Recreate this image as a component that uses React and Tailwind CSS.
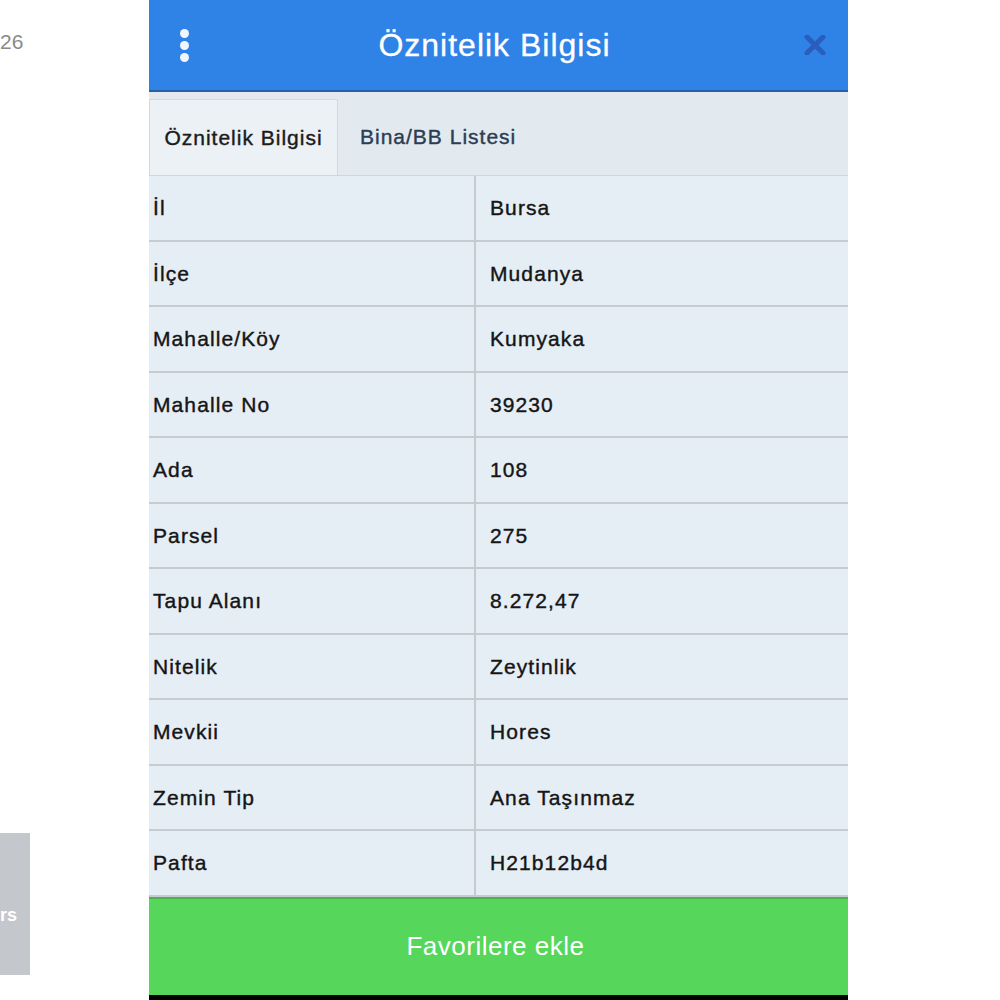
import React from "react";

const rows = [
  ["İl", "Bursa"],
  ["İlçe", "Mudanya"],
  ["Mahalle/Köy", "Kumyaka"],
  ["Mahalle No", "39230"],
  ["Ada", "108"],
  ["Parsel", "275"],
  ["Tapu Alanı", "8.272,47"],
  ["Nitelik", "Zeytinlik"],
  ["Mevkii", "Hores"],
  ["Zemin Tip", "Ana Taşınmaz"],
  ["Pafta", "H21b12b4d"],
];

export default function App() {
  return (
    <div className="relative w-[1000px] h-[1000px] bg-white overflow-hidden flex" style={{ fontFamily: '"Liberation Sans", Arial, sans-serif' }}>
      <div className="w-[149px] shrink-0 flex flex-col">
        <div className="h-[84px] flex items-center text-[21px] text-[#8a8a8a]">26</div>
        <div className="flex-1" />
        <div className="w-[30px] h-[142px] mb-[25px] bg-[#c4c7cc] flex items-center pt-[22px] text-white text-[18px] font-bold">
          <span>rs</span>
        </div>
      </div>
      <div className="w-[699px] shrink-0 flex flex-col h-[1000px]">
        <div className="h-[92px] bg-[#2f82e6] border-b-2 border-[#2a5fa8] flex items-center relative">
          <div className="absolute left-[31px] top-[29px] flex flex-col gap-[3px]">
            <span className="block w-[9px] h-[9px] rounded-full bg-[#f2f6fc]" />
            <span className="block w-[9px] h-[9px] rounded-full bg-[#f2f6fc]" />
            <span className="block w-[9px] h-[9px] rounded-full bg-[#f2f6fc]" />
          </div>
          <div className="flex-1 text-center text-white text-[32px] tracking-[1px] pr-[8px] [-webkit-text-stroke:0.3px_#ffffff]">Öznitelik Bilgisi</div>
          <svg className="absolute left-[655px] top-[35px]" width="22" height="20" viewBox="0 0 22 20">
            <path d="M3 2 L19 18 M19 2 L3 18" stroke="#2b5dbd" strokeWidth="5" strokeLinecap="round" />
          </svg>
        </div>
        <div className="h-[84px] bg-[#e3eaef] flex items-end border-b border-[#cfd6dc]">
          <div className="w-[189px] h-[76px] bg-[#ebf1f5] border border-b-0 border-[#d2d9df] flex items-center justify-center text-[21px] tracking-[1px] text-[#1b1b1b] [-webkit-text-stroke:0.4px_#1b1b1b]">Öznitelik Bilgisi</div>
          <div className="h-[76px] flex items-center pl-[22px] text-[21px] tracking-[1px] text-[#2c3d55] [-webkit-text-stroke:0.4px_#2c3d55]">Bina/BB Listesi</div>
        </div>
        <div className="flex flex-col">
          {rows.map(([k, v]) => (
            <div key={k} className="h-[65.5px] flex border-b-2 border-[#c5cbd0] bg-[#e5eef5]">
              <div className="w-[327px] border-r-2 border-[#c5cbd0] flex items-center pl-[4px] text-[21px] tracking-[1.1px] text-[#151515] [-webkit-text-stroke:0.4px_#151515]">{k}</div>
              <div className="flex-1 flex items-center pl-[14px] text-[21px] tracking-[1.1px] text-[#151515] [-webkit-text-stroke:0.4px_#151515]">{v}</div>
            </div>
          ))}
        </div>
        <div className="h-[98px] bg-[#56d65a] flex items-center justify-center text-white text-[26px] tracking-[0.5px] border-t-2 border-[#4cb050] pr-[6px]">Favorilere ekle</div>
        <div className="flex-1 bg-black" />
      </div>
    </div>
  );
}
